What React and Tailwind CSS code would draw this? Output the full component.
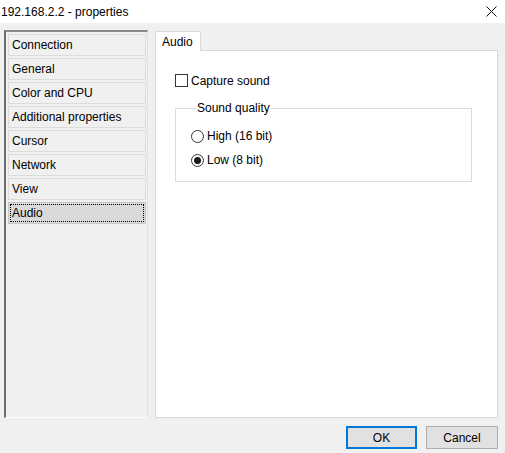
import React from 'react';

const pages = [
  'Connection',
  'General',
  'Color and CPU',
  'Additional properties',
  'Cursor',
  'Network',
  'View',
  'Audio',
];

const PageItem = ({ label, active }) => (
  <div
    className={
      active
        ? 'h-[22px] border border-[#c8c8c8] bg-[#d9d9d9] p-px'
        : 'h-[22px] border border-[#dcdcdc] bg-[#f0f0f0] p-px'
    }
  >
    <div
      className={
        active
          ? 'flex h-full items-center border border-dotted border-black pl-px'
          : 'flex h-full items-center border border-transparent pl-px'
      }
    >
      {label}
    </div>
  </div>
);

const Radio = ({ label, checked }) => (
  <div className="flex h-[24px] items-center">
    <span className="flex h-[13px] w-[13px] items-center justify-center rounded-full border border-[#333333] bg-white">
      {checked && <span className="h-[7px] w-[7px] rounded-full bg-[#1a1a1a]" />}
    </span>
    <span className="ml-[3px]">{label}</span>
  </div>
);

export default function App() {
  return (
    <div
      className="flex h-[453px] w-[505px] flex-col bg-[#f0f0f0] text-[12px] text-black"
      style={{ fontFamily: '"Liberation Sans", Arial, sans-serif' }}
    >
      {/* title bar */}
      <div className="flex h-[23px] items-center justify-between bg-white pl-[1px] pr-[8px]">
        <span className="text-[12px]">192.168.2.2 - properties</span>
        <svg width="11" height="11" viewBox="0 0 11 11" className="mb-[1px]">
          <path d="M0.5 0.5 L10.5 10.5 M10.5 0.5 L0.5 10.5" stroke="#111" strokeWidth="1" />
        </svg>
      </div>

      <div className="flex pl-[4px] pt-[7px]">
        {/* page list */}
        <div className="h-[388px] w-[144px] border-l-2 border-t-2 border-b border-r border-l-[#6d6d6d] border-t-[#8a8a8a] border-b-white border-r-[#e3e3e3]">
          <div className="flex flex-col gap-[2px] pl-[2px] pr-px pt-[2px]">
            {pages.map((p) => (
              <PageItem key={p} label={p} active={p === 'Audio'} />
            ))}
          </div>
        </div>

        {/* tab control */}
        <div className="ml-[7px] flex w-[343px] flex-col pt-px">
          <div className="flex h-[19px]">
            <div className="relative z-10 flex h-[20px] w-[46px] items-center border border-b-0 border-[#d9d9d9] bg-white pl-[6px]">
              Audio
            </div>
          </div>
          <div className="h-[368px] border border-[#d9d9d9] bg-white px-[19px] pt-[23px]">
            <label className="flex h-[13px] items-center">
              <span className="h-[13px] w-[13px] border border-[#333333] bg-white" />
              <span className="ml-[3px]">Capture sound</span>
            </label>

            <fieldset className="mt-[14px] h-[81px] w-[297px] border border-[#dcdcdc] pl-[15px]">
              <legend className="ml-[5px] px-px leading-[14px]">Sound quality</legend>
              <div className="mt-[9px] flex flex-col">
                <Radio label="High (16 bit)" />
                <Radio label="Low (8 bit)" checked />
              </div>
            </fieldset>
          </div>
        </div>
      </div>

      {/* dialog buttons */}
      <div className="mt-[8px] flex justify-end gap-[9px] pr-[7px]">
        <button className="h-[23px] w-[71px] border-2 border-[#0078d7] bg-[#e1e1e1]">OK</button>
        <button className="h-[23px] w-[72px] border border-[#adadad] bg-[#e1e1e1]">Cancel</button>
      </div>
    </div>
  );
}
